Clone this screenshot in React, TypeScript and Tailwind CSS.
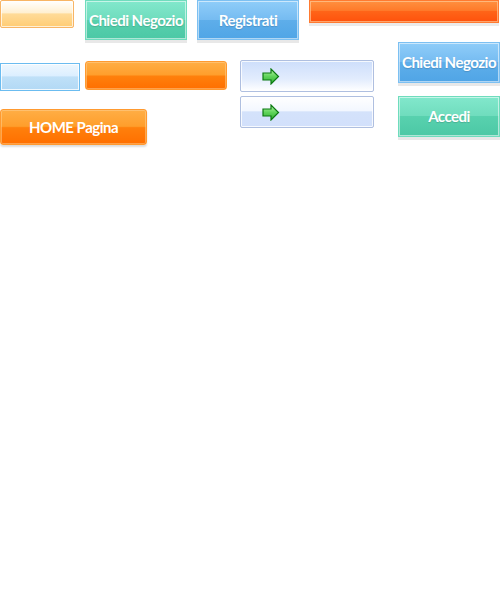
import React from 'react'

const font = { fontFamily: 'Lato, "Open Sans", sans-serif' }

function Arrow() {
  return (
    <svg width="18" height="17" viewBox="0 0 18 17">
      <defs>
        <linearGradient id="ag" x1="0" y1="0" x2="0" y2="1">
          <stop offset="0" stopColor="#b6f5a8" />
          <stop offset="0.5" stopColor="#5fd35a" />
          <stop offset="1" stopColor="#2fae33" />
        </linearGradient>
      </defs>
      <polygon
        points="1,5 9,5 9,1 16.5,8.5 9,16 9,12 1,12"
        fill="url(#ag)"
        stroke="#0c7a12"
        strokeWidth="1.2"
      />
    </svg>
  )
}

export default function App() {
  return (
    <div className="w-[500px] h-[600px] bg-white overflow-hidden" style={font}>
      {/* top row */}
      <div className="flex items-start h-[40px]">
        <div className="w-[74px] h-[28px] rounded-[2px] border border-[#f8b565] bg-[linear-gradient(to_bottom,#ffffff,#fff0d2_45%,#ffdb98_50%,#ffcc74)] shadow-[inset_0_0_0_1px_rgba(255,255,255,0.7)]" />
        <div className="ml-[11px] w-[102px] h-[40px] flex items-center justify-center border border-[#6fdcbd] bg-[linear-gradient(to_bottom,#82e8cc,#6fdcbd_50%,#58d1ae_50%,#4cc8a5)] shadow-[inset_0_0_0_1px_rgba(255,255,255,0.55),0_3px_0_#e8e8e8] text-white font-bold text-[15px] tracking-[-0.5px] [text-shadow:0_1px_1px_rgba(0,0,0,0.15)]">
          Chiedi Negozio
        </div>
        <div className="ml-[10px] w-[102px] h-[40px] flex items-center justify-center border border-[#7cc0f2] bg-[linear-gradient(to_bottom,#8fcdf9,#75bbf1_50%,#5eaeea_50%,#50a5e6)] shadow-[inset_0_0_0_1px_rgba(255,255,255,0.55),0_3px_0_#e8e8e8] text-white font-bold text-[15px] tracking-[-0.5px] [text-shadow:0_1px_1px_rgba(0,0,0,0.15)]">
          Registrati
        </div>
        <div className="ml-[10px] w-[190px] h-[23px] border border-[#ff7a30] bg-[linear-gradient(to_bottom,#ff9040,#ff7a2a_45%,#ff6418_50%,#ff520c)] shadow-[inset_0_0_0_1px_rgba(255,200,150,0.7),0_3px_0_#ebebeb]" />
      </div>

      {/* lower area */}
      <div className="flex items-start mt-[2px]">
        <div className="flex flex-col pt-[19px]">
          <div className="flex items-start">
            <div className="mt-[2px] w-[80px] h-[28px] border border-[#6bbcf0] bg-[linear-gradient(to_bottom,#eef7fe,#dcefff_45%,#bfe0f8_50%,#b2d9f5)] shadow-[inset_0_0_0_1px_rgba(255,255,255,0.8)]" />
            <div className="ml-[5px] w-[142px] h-[29px] rounded-[3px] border border-[#ff9a30] bg-[linear-gradient(to_bottom,#ffae45,#ff9e2c_48%,#ff800c_52%,#ff6f00)] shadow-[inset_0_0_0_1px_rgba(255,210,150,0.5)]" />
          </div>
          <div className="mt-[18px] w-[147px] h-[36px] rounded-[3px] flex items-center justify-center border border-[#ff9a30] bg-[linear-gradient(to_bottom,#ffae45,#ff9e2c_48%,#ff800c_52%,#ff6f00)] shadow-[inset_0_0_0_1px_rgba(255,210,150,0.5),0_2px_2px_#dddddd] text-white font-bold text-[15px] tracking-[-0.5px]">
            HOME Pagina
          </div>
        </div>

        <div className="ml-[13px] pt-[18px] flex flex-col gap-[4px]">
          <div className="w-[134px] h-[32px] rounded-[2px] border border-[#afbfe0] bg-[linear-gradient(to_bottom,#cddefb,#e2ecfd_60%,#ffffff)] flex items-center pl-[21px] shadow-[inset_0_0_0_1px_rgba(255,255,255,0.8)]">
            <Arrow />
          </div>
          <div className="w-[134px] h-[32px] rounded-[2px] border border-[#afbfe0] bg-[linear-gradient(to_bottom,#ffffff,#f3f7ff_45%,#d4e2fb_50%,#d2e0fb)] flex items-center pl-[21px] shadow-[inset_0_0_0_1px_rgba(255,255,255,0.8)]">
            <Arrow />
          </div>
        </div>

        <div className="ml-[24px] flex flex-col">
          <div className="w-[102px] h-[41px] flex items-center justify-center border border-[#7cc0f2] bg-[linear-gradient(to_bottom,#8fcdf9,#75bbf1_50%,#5eaeea_50%,#50a5e6)] shadow-[inset_0_0_0_1px_rgba(255,255,255,0.55),0_3px_0_#e8e8e8] text-white font-bold text-[15px] tracking-[-0.5px] [text-shadow:0_1px_1px_rgba(0,0,0,0.15)]">
            Chiedi Negozio
          </div>
          <div className="mt-[13px] w-[102px] h-[41px] flex items-center justify-center border border-[#6fdcbd] bg-[linear-gradient(to_bottom,#82e8cc,#6fdcbd_50%,#58d1ae_50%,#4cc8a5)] shadow-[inset_0_0_0_1px_rgba(255,255,255,0.55),0_3px_0_#e8e8e8] text-white font-bold text-[15px] tracking-[-0.5px] [text-shadow:0_1px_1px_rgba(0,0,0,0.15)]">
            Accedi
          </div>
        </div>
      </div>
    </div>
  )
}
